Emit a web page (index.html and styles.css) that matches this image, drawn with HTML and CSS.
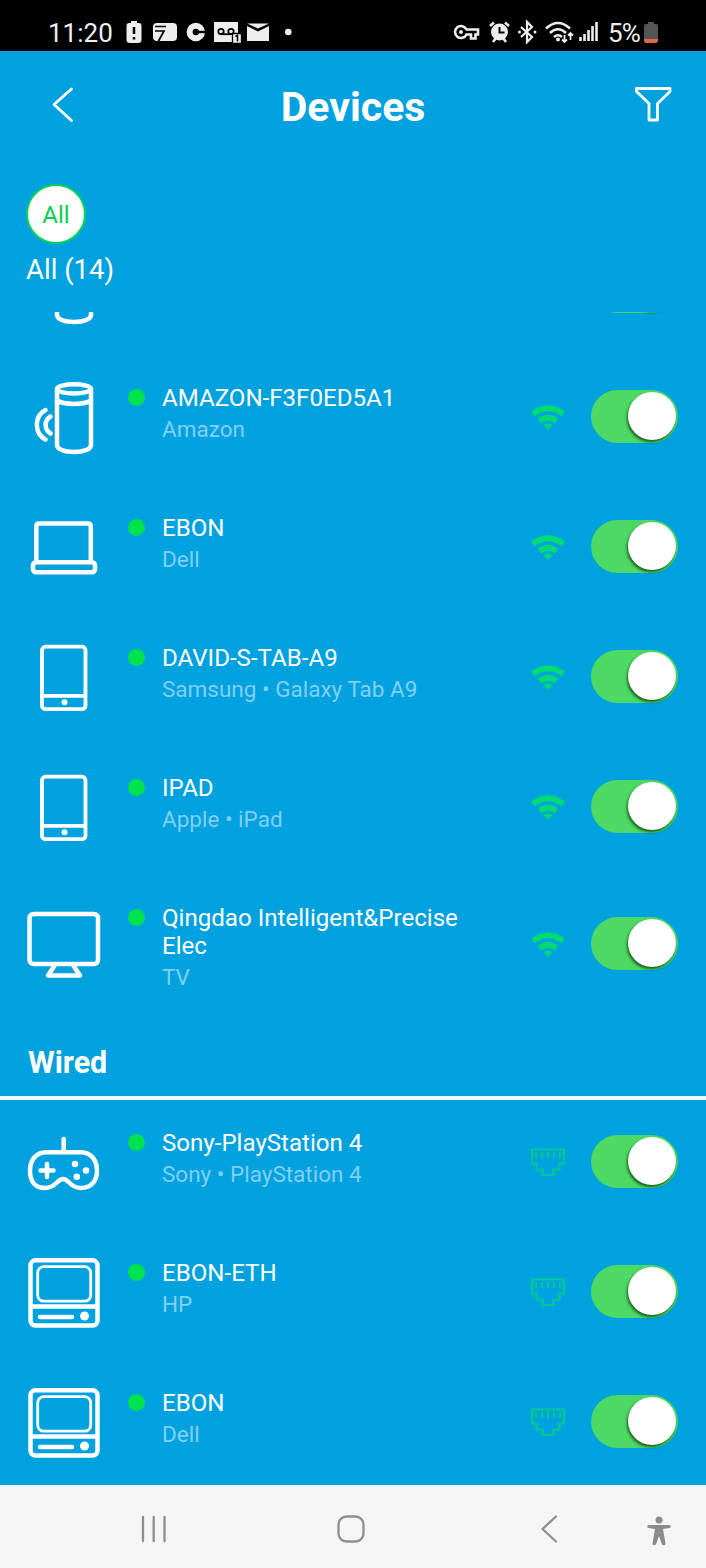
FILE: index.html
```html
<!DOCTYPE html>
<html lang="en">
<head>
<meta charset="utf-8">
<title>Devices</title>
<link rel="stylesheet" href="styles.css">
</head>
<body>
<svg class="defs" aria-hidden="true">
  <symbol id="cylinder" viewBox="0 0 80 80">
    <g class="line">
      <path d="M33 13v56c0 4 7 7 17 7s17-3 17-7v-56"/>
      <ellipse cx="50" cy="12.800" rx="17" ry="4.600"/>
      <path d="M33 24.500c7 4.500 27 4.500 34 0"/>
    </g>
  </symbol>
  <symbol id="speaker" viewBox="0 0 80 80">
    <g class="line">
      <path d="M33 13v56c0 4 7 7 17 7s17-3 17-7v-56"/>
      <ellipse cx="50" cy="12.800" rx="17" ry="4.600"/>
      <path d="M33 24.500c7 4.500 27 4.500 34 0"/>
      <path d="M26.500 40.500c-6.500 4-6.500 13 0 17M21.500 34c-11.500 6-11.500 23.500 0 29.500"/>
    </g>
  </symbol>
  <symbol id="laptop" viewBox="0 0 80 80">
    <g class="line">
      <path d="M12.300 56v-35.500q0-3 3-3h48.500q3 0 3 3v35.500"/>
      <rect x="9" y="56.200" width="62" height="10" rx="3"/>
    </g>
  </symbol>
  <symbol id="tablet" viewBox="0 0 80 80">
    <g class="line tablet">
      <rect x="18" y="10.700" width="43.500" height="62.500" rx="3.500"/>
      <path d="M18 59.800h43"/>
    </g>
    <circle class="solid" cx="40.500" cy="66.300" r="3"/>
  </symbol>
  <symbol id="tv" viewBox="0 0 80 80">
    <g class="line">
      <rect x="5.500" y="11" width="68.500" height="50" rx="4"/>
      <path d="M31 62l-7 10.500h32l-7-10.500"/>
    </g>
  </symbol>
  <symbol id="gamepad" viewBox="0 0 80 80">
    <g class="line">
      <path d="M39.700 18v12M22 31.200h35c10 0 16 8 16 18.500s-6 17.300-16 17.300c-11 0-12-9-18-9s-7 9-18 9c-10 0-15-6.800-15-17.300s6-18.500 16-18.500z"/>
      <path d="M16.500 49.500h13M23 43v13"/>
    </g>
    <g class="solid"><circle cx="51" cy="43" r="3.300"/><circle cx="62" cy="49.500" r="3.300"/><circle cx="52.800" cy="55.800" r="3.300"/></g>
  </symbol>
  <symbol id="desktop" viewBox="0 0 80 80">
    <g class="line">
      <rect x="6.500" y="9.300" width="67" height="65.300" rx="5"/>
      <path d="M7 55.500h66M16 66h32"/>
    </g>
    <rect class="screen" x="13.700" y="15.700" width="53" height="34.500" rx="6"/>
    <circle class="solid" cx="60.500" cy="65" r="4.500"/>
  </symbol>
  <symbol id="wifi" viewBox="0 0 36 28">
    <path class="arc" d="M2.800 12q15.200-11.500 30.400 0M9.500 19q8.500-6.500 17 0"/>
    <path class="tip" d="M13.500 23q4.500-3 9 0L18 27.800z"/>
  </symbol>
  <symbol id="port" viewBox="0 0 36 32">
    <path class="wire" d="M2 4.500h32v14h-4.500v6h-6v5.500h-11v-5.500h-6v-6H2zM6 7v6M12 7v6M18 7v6M24 7v6M30 7v6"/>
  </symbol>
</svg>

<header class="status">
  <span class="clock">11:20</span>
  <svg class="status-left" viewBox="0 0 170 26">
    <g fill="#eee">
      <path d="M9 4V2h6v2h2q2.500 0 2.500 3v14q0 3-3.500 3H8q-3.500 0-3.500-3V7q0-3 2.500-3z"/>
      <rect x="31" y="4" width="24" height="18" rx="4"/>
      <path d="M92 3h24v12h3v8H92z"/>
      <path d="M125 4.500h22l-11 5z"/><path d="M125 7l11 5.500L147 7v15h-22z"/>
      <circle cx="166.300" cy="13" r="3.300"/>
    </g>
    <path d="M12 8v7M12 18v2.500" stroke="#000" stroke-width="2.500" fill="none"/>
    <path d="M33 7.500h11M33 12h9l-6 11" stroke="#000" stroke-width="1.700" fill="none"/>
    <circle cx="73.800" cy="13" r="6.200" stroke="#eee" stroke-width="6" fill="none"/>
    <path d="M75 13h9" stroke="#000" stroke-width="2.400"/>
    <g fill="none" stroke="#000" stroke-width="1.800"><circle cx="99" cy="12.500" r="2.700"/><circle cx="109" cy="12.500" r="2.700"/><path d="M99 15.200h10"/></g>
    <path d="M110.500 14.500h9v10h-9z" fill="#eee" stroke="#000" stroke-width="1.300"/>
    <path d="M113.500 17.500l2-1v6" fill="none" stroke="#000" stroke-width="1.500"/>
  </svg>
  <svg class="status-right" viewBox="0 0 148 26">
    <g fill="none" stroke="#eee" stroke-width="2.600">
      <path d="M13.500 10.500a6 6 0 1 0 0 5h4.500v4h4.500v-4h2.500v-5z"/>
      <path d="M68 8l11 10-5 5V3l5 5-11 10" stroke-width="2.200"/>
      <path d="M93 9.500q12-11 24 0M97 14q8-7.500 16 0M101 18q4-3.500 8 0" stroke-width="2.500"/>
      <path d="M111.500 16v7m-2.500-2.500l2.500 2.500 2.500-2.500M117.500 21v-7m-2.500 2.500l2.500-2.500 2.500 2.500" stroke-width="1.800"/>
      <path d="M127.500 22v-4M131.500 22v-7M135.500 22V11M139.500 22V7M143.500 22V3" stroke-width="2.600"/>
      <path d="M37 7l4-3.500M56 7l-4-3.500M40 23l3-4M53 23l-3-4"/>
    </g>
    <g fill="#eee"><circle cx="8" cy="13" r="2"/><circle cx="46.500" cy="13" r="8.500"/><circle cx="66.500" cy="13" r="1.500"/><circle cx="82" cy="13" r="1.500"/><circle cx="105" cy="20.500" r="2"/></g>
    <path d="M46.500 8v5.500h5" fill="none" stroke="#000" stroke-width="2"/>
  </svg>
  <span class="percent">5%</span>
  <svg class="battery" viewBox="0 0 14 21"><path d="M4 2V0h6v2h2q2 0 2 2v14q0 3-3 3H3q-3 0-3-3V4q0-2 2-2z" fill="#555"/><path d="M0 17h14v1q0 3-3 3H3q-3 0-3-3z" fill="#e2674a"/></svg>
</header>

<main class="app">
  <div class="titlebar">
    <svg class="back" viewBox="0 0 24 36"><path d="M20.500 2L3 17.500l17.500 16"/></svg>
    <h1>Devices</h1>
    <svg class="filter" viewBox="0 0 38 36"><path d="M2.500 1.500h33.500v3L23.500 16.500v16.500h-8.500V16.500L2.500 4.500z"/></svg>
  </div>
  <div class="filters">
    <div class="chip">All</div>
    <div class="count">All (14)</div>
  </div>
  <section class="list">
    <div class="row clipped">
      <svg class="device"><use href="#cylinder"/></svg><span class="dot"></span><div class="info"></div>
      <svg class="wifi"><use href="#wifi"/></svg><span class="toggle"></span>
    </div>
    <div class="row">
      <svg class="device"><use href="#speaker"/></svg><span class="dot"></span>
      <div class="info"><div class="name">AMAZON-F3F0ED5A1</div><div class="sub">Amazon</div></div>
      <svg class="wifi"><use href="#wifi"/></svg><span class="toggle"></span>
    </div>
    <div class="row">
      <svg class="device"><use href="#laptop"/></svg><span class="dot"></span>
      <div class="info"><div class="name">EBON</div><div class="sub">Dell</div></div>
      <svg class="wifi"><use href="#wifi"/></svg><span class="toggle"></span>
    </div>
    <div class="row">
      <svg class="device"><use href="#tablet"/></svg><span class="dot"></span>
      <div class="info"><div class="name">DAVID-S-TAB-A9</div><div class="sub">Samsung • Galaxy Tab A9</div></div>
      <svg class="wifi"><use href="#wifi"/></svg><span class="toggle"></span>
    </div>
    <div class="row">
      <svg class="device"><use href="#tablet"/></svg><span class="dot"></span>
      <div class="info"><div class="name">IPAD</div><div class="sub">Apple • iPad</div></div>
      <svg class="wifi"><use href="#wifi"/></svg><span class="toggle"></span>
    </div>
    <div class="row tall">
      <svg class="device"><use href="#tv"/></svg><span class="dot"></span>
      <div class="info"><div class="name">Qingdao Intelligent&amp;Precise<br>Elec</div><div class="sub">TV</div></div>
      <svg class="wifi"><use href="#wifi"/></svg><span class="toggle"></span>
    </div>
    <h2>Wired</h2>
    <div class="row">
      <svg class="device"><use href="#gamepad"/></svg><span class="dot"></span>
      <div class="info"><div class="name">Sony-PlayStation 4</div><div class="sub">Sony • PlayStation 4</div></div>
      <svg class="port"><use href="#port"/></svg><span class="toggle"></span>
    </div>
    <div class="row">
      <svg class="device"><use href="#desktop"/></svg><span class="dot"></span>
      <div class="info"><div class="name">EBON-ETH</div><div class="sub">HP</div></div>
      <svg class="port"><use href="#port"/></svg><span class="toggle"></span>
    </div>
    <div class="row">
      <svg class="device"><use href="#desktop"/></svg><span class="dot"></span>
      <div class="info"><div class="name">EBON</div><div class="sub">Dell</div></div>
      <svg class="port"><use href="#port"/></svg><span class="toggle"></span>
    </div>
  </section>
</main>

<nav class="navbar">
  <svg class="recents" viewBox="0 0 28 28"><path d="M3 2v24M13.700 2v24M24.500 2v24"/></svg>
  <svg class="home" viewBox="0 0 28 28"><rect x="1.500" y="1.500" width="25" height="25" rx="8"/></svg>
  <svg class="nav-back" viewBox="0 0 18 28"><path d="M16 1.500L2.500 14 16 26.500"/></svg>
  <svg class="access" viewBox="0 0 24 30"><circle cx="12" cy="4" r="3.500"/><path d="M1.500 9h21q1.200 0 1.200 1.500t-1.200 1.500L16 13 18.500 27.500q.2 1.700-1.500 1.700t-2.200-1.200L12 20 9.200 28q-.5 1.200-2.200 1.200T5.500 27.500L8 13l-6.500-1q-1.200 0-1.200-1.500T1.500 9z"/></svg>
</nav>
</body>
</html>
```

FILE: styles.css
```css
* { box-sizing: border-box; }
body {
  margin: 0;
  width: 706px;
  height: 1568px;
  overflow: hidden;
  display: flex;
  flex-direction: column;
  font-family: Roboto, sans-serif;
  background: #00a1df;
  color: #fff;
}
svg { display: block; flex: none; }
.defs { position: absolute; width: 0; height: 0; }

.status {
  height: 51px;
  flex: none;
  display: flex;
  align-items: flex-start;
  padding: 19px 0 0 48px;
  background: #000;
  color: #eee;
  font-size: 26px;
  line-height: 28px;
}
.clock { width: 74px; }
.status-left { width: 170px; height: 26px; }
.status-right { width: 148px; height: 26px; margin-left: 161px; }
.percent { width: 36px; margin-left: 7px; letter-spacing: -.8px; }
.battery { width: 14px; height: 21px; margin-top: 3px; }

.app { flex: 1; min-height: 0; display: flex; flex-direction: column; }
.titlebar {
  height: 108px;
  flex: none;
  display: flex;
  align-items: center;
  justify-content: space-between;
  padding: 0 34px 0 51px;
}
h1 { margin: 3px 3px 0 0; font-size: 41px; line-height: 48px; font-weight: 700; }
.back { width: 24px; height: 36px; }
.filter { width: 38px; height: 36px; }
.back path, .filter path { fill: none; stroke: #fff; stroke-width: 2.8; stroke-linecap: round; stroke-linejoin: round; }
.filters { height: 153px; flex: none; padding: 25px 26px 0; }
.chip {
  width: 60px;
  height: 60px;
  border: 2px solid #06d455;
  border-radius: 50%;
  background: #fff;
  color: #06cf50;
  font-size: 24px;
  line-height: 58px;
  text-align: center;
}
.count { margin-top: 9px; font-size: 27.5px; line-height: 34px; }

.list { flex: 1; min-height: 0; overflow: hidden; }
.row { height: 130px; display: flex; align-items: center; padding: 0 28px 0 24px; }
.row.clipped { margin-top: -91px; }
.row.tall { height: 144px; }
.device { width: 80px; height: 80px; }
.line { fill: none; stroke: #fff; stroke-width: 4.5; stroke-linecap: round; stroke-linejoin: round; }
.line.tablet { stroke-width: 3.8; }
.solid { fill: #fff; }
.screen { fill: none; stroke: #fff; stroke-width: 2.8; }
.dot { align-self: flex-start; width: 17px; height: 17px; margin: 38px 0 0 24px; border-radius: 50%; background: #00e34e; }
.info { flex: 1; align-self: flex-start; padding: 33px 0 0 17px; }
.name { font-size: 24.1px; line-height: 28px; white-space: nowrap; }
.sub { margin-top: 4px; font-size: 22.5px; line-height: 27px; color: #80d0f4; white-space: nowrap; }
.wifi { width: 36px; height: 28px; margin-right: 25px; }
.port { width: 36px; height: 32px; margin-right: 25px; }
.arc { fill: none; stroke: #00dc73; stroke-width: 6; }
.tip { fill: #00dc73; }
.wire { fill: none; stroke: #00cb91; stroke-width: 2.2; }
.toggle { width: 87px; height: 53px; flex: none; display: flex; justify-content: flex-end; padding: 2px 2px; border-radius: 27px; background: #4cd964; }
.toggle::before { content: ""; width: 48px; height: 48px; border-radius: 50%; background: #fff; box-shadow: -1px 2px 3px rgba(0, 50, 0, .75); }
h2 { height: 85px; margin: 0 0 -4px; padding: 30px 28px 0; border-bottom: 4px solid #f3fcff; font-size: 30.5px; line-height: 36px; font-weight: 700; }

.navbar {
  height: 83px;
  flex: none;
  display: flex;
  align-items: center;
  padding: 4px 0 0 140px;
  background: #f5f5f5;
}
.recents { width: 28px; height: 28px; }
.home { width: 28px; height: 28px; margin-left: 169px; }
.nav-back { width: 18px; height: 28px; margin-left: 175px; }
.access { width: 24px; height: 30px; margin: 4px 0 0 89px; fill: #8b8b8b; }
.recents, .home, .nav-back { fill: none; stroke: #8e8e8e; stroke-width: 2.3; stroke-linecap: round; stroke-linejoin: round; }
```
